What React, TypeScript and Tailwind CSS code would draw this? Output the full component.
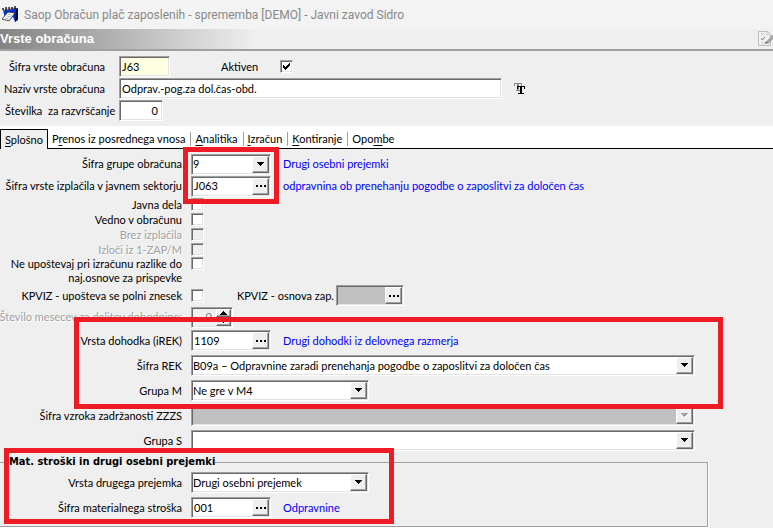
import { useState, type ReactNode } from 'react';

const sunken =
  'border border-t-[#a0a0a0] border-l-[#a0a0a0] border-r-white border-b-white shadow-[inset_1px_1px_0_#696969,inset_-1px_-1px_0_#e3e3e3]';
const raised =
  'flex items-center justify-center bg-[#efefef] border border-t-white border-l-white border-r-[#696969] border-b-[#696969] shadow-[inset_-1px_-1px_0_#a0a0a0]';

function Dots() {
  return (
    <svg width="10" height="2" viewBox="0 0 10 2" shapeRendering="crispEdges" aria-hidden="true">
      <path d="M0 0h2v2H0zM4 0h2v2H4zM8 0h2v2H8z" fill="#000" />
    </svg>
  );
}

function Arrow({ disabled = false }: { disabled?: boolean }) {
  return (
    <svg width="8" height="5" viewBox="0 0 8 5" shapeRendering="crispEdges" aria-hidden="true">
      {disabled && <path d="M1 1h7v1h-1v1h-1v1h-1v1h-1v-1h-1v-1h-1v-1h-1z" fill="#fff" />}
      <path d="M0 0h7v1h-1v1h-1v1h-1v1h-1v-1h-1v-1h-1v-1h-1z" fill={disabled ? '#a0a0a0' : '#000'} />
    </svg>
  );
}

function Combo({ id, value, className, disabled = false }: { id: string; value: string; className: string; disabled?: boolean }) {
  return (
    <div className={`relative h-[21px] p-px ${sunken} ${disabled ? 'bg-[#c0c0c0]' : 'bg-white'} ${className}`}>
      <select
        id={id}
        disabled={disabled}
        className="block h-full w-full appearance-none bg-transparent text-black outline-none"
      >
        <option>{value}</option>
      </select>
      <span className={`pointer-events-none absolute inset-y-px right-px w-[17px] ${raised}`}>
        <Arrow disabled={disabled} />
      </span>
    </div>
  );
}

function Lookup({ id, value, className, disabled = false }: { id: string; value: string; className: string; disabled?: boolean }) {
  return (
    <div className={`flex h-[21px] p-px ${sunken} ${disabled ? 'bg-[#c0c0c0]' : 'bg-white'} ${className}`}>
      <input id={id} defaultValue={value} disabled={disabled} className="min-w-0 flex-1 bg-transparent pl-px outline-none" />
      <button type="button" aria-label="Izberi" className={`w-[17px] shrink-0 ${raised}`}>
        <Dots />
      </button>
    </div>
  );
}

function Check({ id, disabled = false, checked = false }: { id: string; disabled?: boolean; checked?: boolean }) {
  return (
    <span className="relative block h-[13px] w-[13px]">
      <input
        id={id}
        type="checkbox"
        disabled={disabled}
        defaultChecked={checked}
        className={`peer block h-[13px] w-[13px] appearance-none ${sunken} ${disabled ? 'bg-[#efefef]' : 'bg-white'}`}
      />
      <svg
        className="pointer-events-none absolute inset-0 hidden peer-checked:block"
        width="13"
        height="13"
        viewBox="0 0 13 13"
        shapeRendering="crispEdges"
        aria-hidden="true"
      >
        <path d="M3 5h1v1h1v1h1v-1h1v-1h1v-1h1v-1h1v3h-1v1h-1v1h-1v1h-1v1h-1v-1h-1v-1h-1z" fill="#000" />
      </svg>
    </span>
  );
}

function Row({ id, label, height = 'h-[25px]', muted = false, children }: { id: string; label: ReactNode; height?: string; muted?: boolean; children?: ReactNode }) {
  return (
    <div className={`grid grid-cols-[182px_minmax(0,1fr)] items-center gap-x-[9px] ${height}`}>
      <label htmlFor={id} className={`justify-self-end whitespace-nowrap text-right ${muted ? 'text-[#a0a0a0] [text-shadow:1px_1px_0_#fff]' : ''}`}>
        {label}
      </label>
      <div className="flex items-center">{children}</div>
    </div>
  );
}

function Note({ children }: { children: ReactNode }) {
  return <span className="ml-3 whitespace-nowrap text-[#0000ff]">{children}</span>;
}

const tabs: [string, string, string][] = [
  ['', 'S', 'plošno'],
  ['P', 'r', 'enos iz posrednega vnosa'],
  ['', 'A', 'nalitika'],
  ['', 'I', 'zračun'],
  ['', 'K', 'ontiranje'],
  ['Opo', 'm', 'be'],
];

function Tabs() {
  const [active, setActive] = useState(0);
  return (
    <div role="tablist" className="flex h-[23px] items-end border-b border-black bg-white">
      {tabs.map(([a, b, c], i) => (
        <button
          key={c}
          type="button"
          role="tab"
          aria-selected={active === i}
          onClick={() => setActive(i)}
          className={
            active === i
              ? '-mb-px flex h-5 items-center border-x border-t border-black bg-[#efefef] px-1'
              : 'flex h-[19px] items-center'
          }
        >
          <span className={active === i ? '' : `pl-1 pr-[5px] leading-[14px] ${i < tabs.length - 1 ? 'border-r border-[#a0a0a0]' : ''}`}>
            {a}
            <u className="underline-offset-2">{b}</u>
            {c}
          </span>
        </button>
      ))}
    </div>
  );
}

function AppIcon() {
  return (
    <svg width="17" height="17" viewBox="0 0 17 17" aria-hidden="true">
      <path d="M1 4l13-2 2 1v11l-3 2-2-5-8 1z" fill="#0a32c8" />
      <path d="M14 3l2-1v11l-3 3z" fill="#000a3c" />
      <path d="M1 4V2M4 4V1M7 3V1M10 3V1M13 3V0" stroke="#101010" strokeWidth="1.4" />
      <path d="M2 4h1M5 3h1M8 3h1M11 2h1" stroke="#e0b030" strokeWidth="1.2" />
      <path d="M6 6l7 1-6 8-7-2z" fill="#fff" stroke="#222" strokeWidth=".8" />
      <path d="M6 8l4 1M5 10l4 1M3 12l4 1" stroke="#7a8fc8" strokeWidth=".7" />
    </svg>
  );
}

function EditIcon() {
  return (
    <svg width="15" height="16" viewBox="0 0 15 16" aria-hidden="true">
      <path d="M.5 .5h9l3 3v11H.5z" fill="#f3f3f3" stroke="#bcbcbc" />
      <path d="M3 2.500h4M3 4h4M3 11h3M3 13h3" stroke="#d4d4d4" />
      <path d="M9 1v3h3" fill="none" stroke="#c4c4c4" />
      <path d="M3 7l1.500 2L7 6" fill="none" stroke="#777" />
      <path d="M8 11l6-7h1v4l-5 5z" fill="#a4a4a4" />
      <path d="M6.500 13l1.500-3 2 2z" fill="#6a6a6a" />
    </svg>
  );
}

function FontIcon() {
  return (
    <svg width="11" height="11" viewBox="0 0 11 11" shapeRendering="crispEdges" aria-hidden="true">
      <path d="M0 0h8v3h-1v-2h-2v6h1v1h-4v-1h1v-6h-2v2h-1z" fill="#888" />
      <path d="M3 3h8v3h-1v-2h-2v6h2v1h-6v-1h2v-6h-2v2h-1z" fill="#000" />
    </svg>
  );
}

export default function App() {
  return (
    <div className="min-h-screen overflow-hidden bg-[#efefef] font-[Lato,Roboto,sans-serif] text-[11px] leading-[14px] text-black">
      <header className="flex h-[29px] items-center gap-[5px] bg-[#f3f3f3] pl-0.5 font-[Roboto,sans-serif] text-[12px] text-[#888]">
        <AppIcon />
        <span className="whitespace-nowrap">Saop Obračun plač zaposlenih - sprememba [DEMO] - Javni zavod Sidro</span>
      </header>

      <div className="flex h-[22px] items-center justify-between border-b-2 border-[#a0a0a0] bg-linear-to-r from-[#848484] to-[#efefef] to-[256px]">
        <h1 className="font-['Liberation_Sans',sans-serif] text-[13px] font-bold text-white">Vrste obračuna</h1>
        <button type="button" aria-label="Uredi">
          <EditIcon />
        </button>
      </div>

      <section className="grid h-[75px] grid-cols-[105px_minmax(0,1fr)] content-start items-center gap-x-[14px] gap-y-px pt-[5px]">
        <label htmlFor="sifra" className="justify-self-end whitespace-nowrap">Šifra vrste obračuna</label>
        <div className="flex items-center">
          <input id="sifra" defaultValue="J63" className={`h-[21px] w-[51px] bg-[#ffffe1] px-0.5 ${sunken}`} />
          <label htmlFor="aktiven" className="ml-[51px] w-[59px]">Aktiven</label>
          <Check id="aktiven" checked />
        </div>
        <label htmlFor="naziv" className="justify-self-end whitespace-nowrap">Naziv vrste obračuna</label>
        <div className="flex items-center gap-3">
          <input id="naziv" defaultValue="Odprav.-pog.za dol.čas-obd." className={`h-[21px] w-[383px] bg-white px-0.5 ${sunken}`} />
          <button type="button" aria-label="Pisava">
            <FontIcon />
          </button>
        </div>
        <label htmlFor="stevilka" className="ml-[5px] whitespace-pre">Številka  za razvrščanje</label>
        <input id="stevilka" defaultValue="0" className={`h-[21px] w-[44px] bg-white pr-1 text-right ${sunken}`} />
      </section>

      <Tabs />

      <main className="relative pt-1">
        <Row id="grupa" label="Šifra grupe obračuna" height="h-[22px]">
          <Combo id="grupa" value="9" className="w-[80px]" />
          <Note>Drugi osebni prejemki</Note>
        </Row>
        <Row id="izplacilo" label="Šifra vrste izplačila v javnem sektorju" height="h-[22px]">
          <Lookup id="izplacilo" value="J063" className="w-[80px]" />
          <Note>odpravnina ob prenehanju pogodbe o zaposlitvi za določen čas</Note>
        </Row>
        <Row id="javna" label="Javna dela" height="h-[15px]"><Check id="javna" /></Row>
        <Row id="vedno" label="Vedno v obračunu" height="h-[15px]"><Check id="vedno" /></Row>
        <Row id="brez" label="Brez izplačila" height="h-[15px]" muted><Check id="brez" disabled /></Row>
        <Row id="izloci" label="Izloči iz 1-ZAP/M" height="h-[15px]" muted><Check id="izloci" disabled /></Row>
        <div className="grid grid-cols-[182px_minmax(0,1fr)] gap-x-[9px]">
          <label htmlFor="razlika" className="justify-self-end whitespace-nowrap text-right">
            Ne upoštevaj pri izračunu razlike do
            <br />
            naj.osnove za prispevke
          </label>
          <Check id="razlika" />
        </div>
        <Row id="kpviz" label="KPVIZ - upošteva se polni znesek" height="h-[21px]">
          <Check id="kpviz" />
          <label htmlFor="osnova" className="ml-[33px] w-[99px] whitespace-nowrap">KPVIZ - osnova zap.</label>
          <Lookup id="osnova" value="" className="w-[68px]" disabled />
        </Row>
        <Row id="meseci" label="Število mesecev za delitev dohodnine:" height="h-[22px]" muted>
          <div className={`flex h-[21px] w-[42px] p-px ${sunken}`}>
            <input id="meseci" defaultValue="0" disabled className="min-w-0 flex-1 pr-1 text-right text-[#808080]" />
            <span className="flex w-[15px] flex-col">
              <button type="button" aria-label="Več" className={`h-1/2 ${raised}`}>
                <svg width="7" height="4" viewBox="0 0 7 4" shapeRendering="crispEdges"><path d="M3 0h1v1h1v1h1v1h1v1h-7v-1h1v-1h1v-1h1z" /></svg>
              </button>
              <button type="button" aria-label="Manj" className={`h-1/2 ${raised}`}>
                <svg width="7" height="4" viewBox="0 0 7 4" shapeRendering="crispEdges"><path d="M0 0h7v1h-1v1h-1v1h-1v1h-1v-1h-1v-1h-1v-1h-1z" /></svg>
              </button>
            </span>
          </div>
        </Row>

        <Row id="irek" label="Vrsta dohodka (iREK)">
          <Lookup id="irek" value="1109" className="w-[80px]" />
          <Note>Drugi dohodki iz delovnega razmerja</Note>
        </Row>
        <Row id="rek" label="Šifra REK">
          <Combo id="rek" value="B09a – Odpravnine zaradi prenehanja pogodbe o zaposlitvi za določen čas" className="mr-[78px] flex-1" />
        </Row>
        <Row id="grupam" label="Grupa M">
          <Combo id="grupam" value="Ne gre v M4" className="w-[178px]" />
        </Row>
        <Row id="zzzs" label="Šifra vzroka zadržanosti ZZZS">
          <Combo id="zzzs" value="" className="mr-[78px] flex-1" disabled />
        </Row>
        <Row id="grupas" label="Grupa S">
          <Combo id="grupas" value="" className="mr-[78px] flex-1" />
        </Row>

        <fieldset className="mr-[65px] mt-0.5 border border-l-0 border-[#a0a0a0] pb-1.5 pt-px shadow-[1px_1px_0_#fff]">
          <legend className="ml-[9px] font-['DejaVu_Sans_Condensed','DejaVu_Sans',sans-serif] font-bold">
            Mat. stroški in drugi osebni prejemki
          </legend>
          <Row id="prejemek" label="Vrsta drugega prejemka">
            <Combo id="prejemek" value="Drugi osebni prejemek" className="w-[178px]" />
          </Row>
          <Row id="strosek" label="Šifra materialnega stroška">
            <Lookup id="strosek" value="001" className="w-[80px]" />
            <Note>Odpravnine</Note>
          </Row>
        </fieldset>

        <div className="pointer-events-none absolute -top-0.5 left-[183px] h-[57px] w-[96px] border-[5px] border-[#ed1c24]" />
        <div className="pointer-events-none absolute left-[74px] right-[50px] top-[168px] h-[92px] border-[5px] border-[#ed1c24]" />
        <div className="pointer-events-none absolute left-1 top-[299px] h-[76px] w-[390px] border-[5px] border-[#ed1c24]" />
      </main>
    </div>
  );
}
